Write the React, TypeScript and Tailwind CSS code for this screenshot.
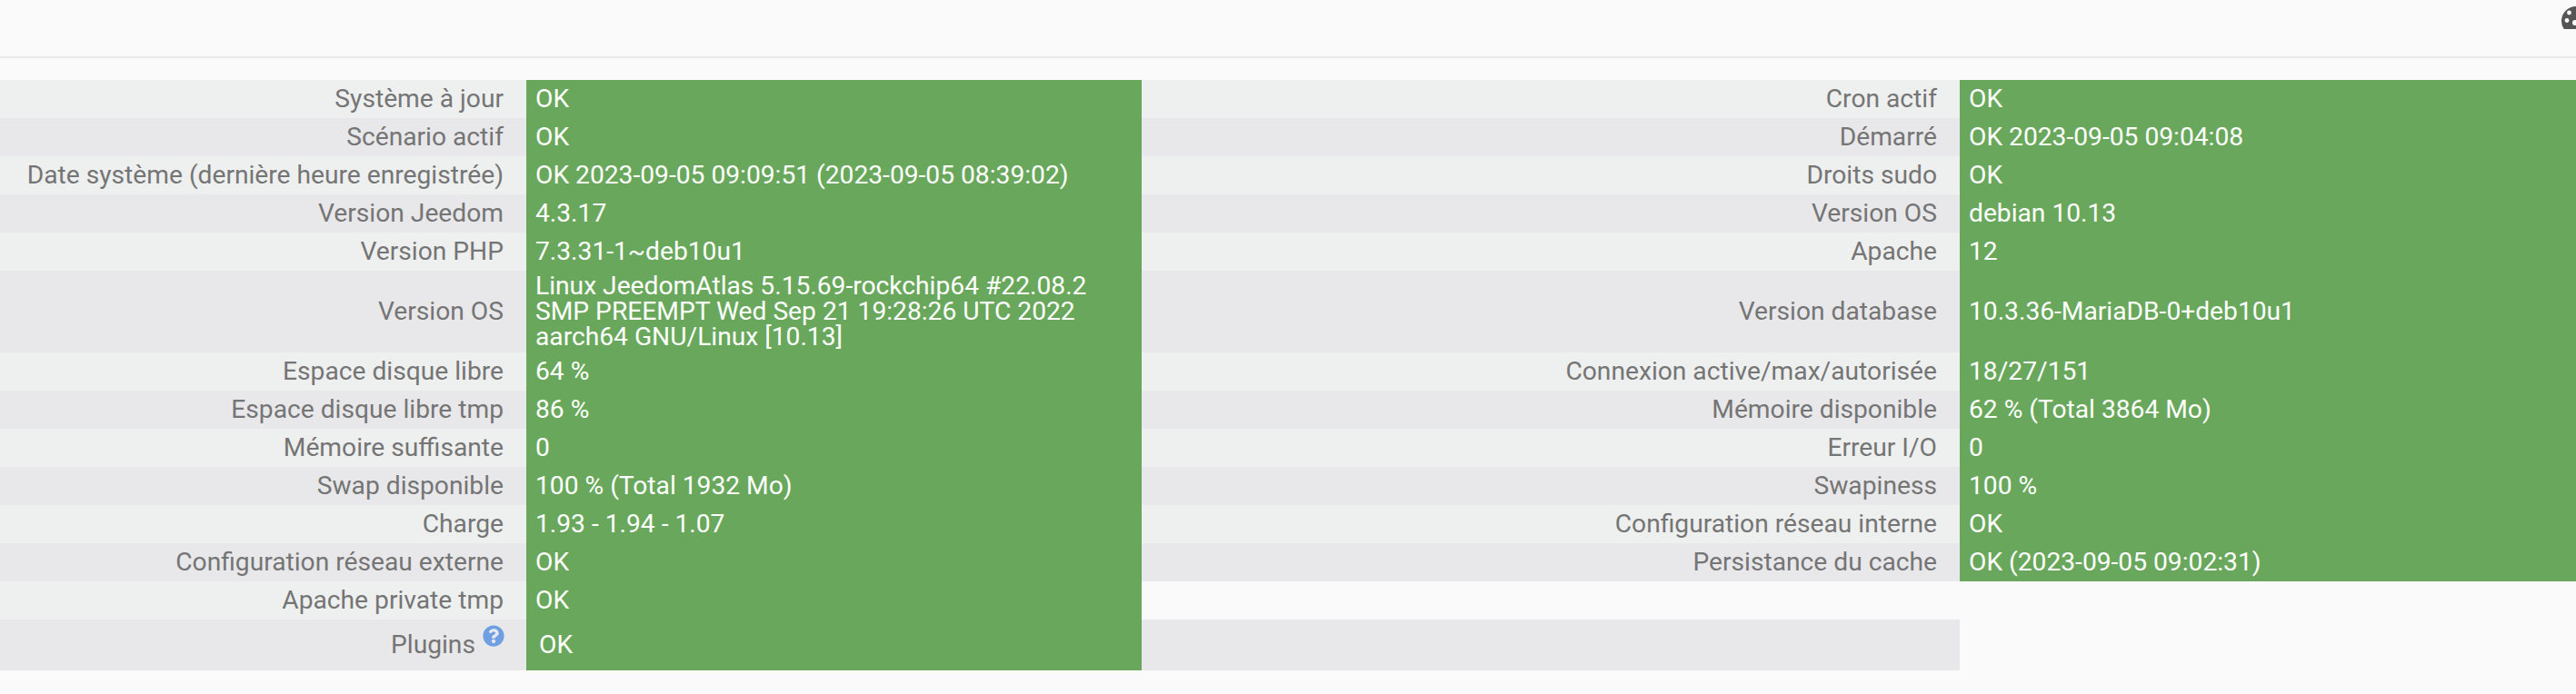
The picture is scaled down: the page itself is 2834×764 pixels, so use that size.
import { FaQuestionCircle } from 'react-icons/fa';

type Row = { label: string; value: string; label2?: string; value2?: string };

const rows: Row[] = [
  { label: 'Système à jour', value: 'OK', label2: 'Cron actif', value2: 'OK' },
  { label: 'Scénario actif', value: 'OK', label2: 'Démarré', value2: 'OK 2023-09-05 09:04:08' },
  { label: 'Date système (dernière heure enregistrée)', value: 'OK 2023-09-05 09:09:51 (2023-09-05 08:39:02)', label2: 'Droits sudo', value2: 'OK' },
  { label: 'Version Jeedom', value: '4.3.17', label2: 'Version OS', value2: 'debian 10.13' },
  { label: 'Version PHP', value: '7.3.31-1~deb10u1', label2: 'Apache', value2: '12' },
  { label: 'Version OS', value: 'Linux JeedomAtlas 5.15.69-rockchip64 #22.08.2 SMP PREEMPT Wed Sep 21 19:28:26 UTC 2022 aarch64 GNU/Linux [10.13]', label2: 'Version database', value2: '10.3.36-MariaDB-0+deb10u1' },
  { label: 'Espace disque libre', value: '64 %', label2: 'Connexion active/max/autorisée', value2: '18/27/151' },
  { label: 'Espace disque libre tmp', value: '86 %', label2: 'Mémoire disponible', value2: '62 % (Total 3864 Mo)' },
  { label: 'Mémoire suffisante', value: '0', label2: 'Erreur I/O', value2: '0' },
  { label: 'Swap disponible', value: '100 % (Total 1932 Mo)', label2: 'Swapiness', value2: '100 %' },
  { label: 'Charge', value: '1.93 - 1.94 - 1.07', label2: 'Configuration réseau interne', value2: 'OK' },
  { label: 'Configuration réseau externe', value: 'OK', label2: 'Persistance du cache', value2: 'OK (2023-09-05 09:02:31)' },
  { label: 'Apache private tmp', value: 'OK' },
];

function Label({ text, odd }: { text: string; odd: boolean }) {
  return (
    <div className={`flex items-center justify-end pr-[25px] text-right text-[#757575] ${odd ? 'bg-[#eeefef]' : 'bg-[#e8e8ea]'}`}>
      {text}
    </div>
  );
}

function Value({ text }: { text: string }) {
  return <div className="flex items-center bg-[#69a85c] px-[10px] py-[3px] text-white">{text}</div>;
}

export default function App() {
  return (
    <div className="h-[764px] overflow-hidden bg-[#fafafa] font-['Roboto',sans-serif] text-[28.2px] leading-[28px]">
      {/* Top bar */}
      <div className="flex h-[64px] justify-end border-b-2 border-[#e9e9e9]">
        <div className="mt-[7px] h-[25px] w-[16px] overflow-hidden">
          <svg viewBox="0 0 32 32" className="h-[32px] w-[32px] text-[#555]">
            <circle cx="16" cy="16" r="16" fill="currentColor" />
            <circle cx="8.5" cy="7" r="2.4" fill="#fafafa" />
            <circle cx="6" cy="15.5" r="2.4" fill="#fafafa" />
            <circle cx="15" cy="18" r="3" fill="#fafafa" />
          </svg>
        </div>
      </div>

      {/* Health table */}
      <div className="mt-[24px]">
        {rows.map((row, i) => (
          <div key={i} className="grid min-h-[42px] grid-cols-[579px_677px_900px_678px]">
            <Label text={row.label} odd={i % 2 === 0} />
            <Value text={row.value} />
            {row.label2 && <Label text={row.label2} odd={i % 2 === 0} />}
            {row.value2 && <Value text={row.value2} />}
          </div>
        ))}
        <div className="grid h-[56px] grid-cols-[579px_677px_900px_678px]">
          <div className="flex items-center justify-end bg-[#e8e8ea] pr-[24px] text-[#757575]">
            Plugins
            <FaQuestionCircle className="relative top-[-10px] ml-[8px] text-[24px] text-[#6f9fe3]" />
          </div>
          <div className="flex items-center bg-[#69a85c] px-[14px] text-white">OK</div>
          <div className="bg-[#e8e8ea]" />
        </div>
      </div>
    </div>
  );
}
